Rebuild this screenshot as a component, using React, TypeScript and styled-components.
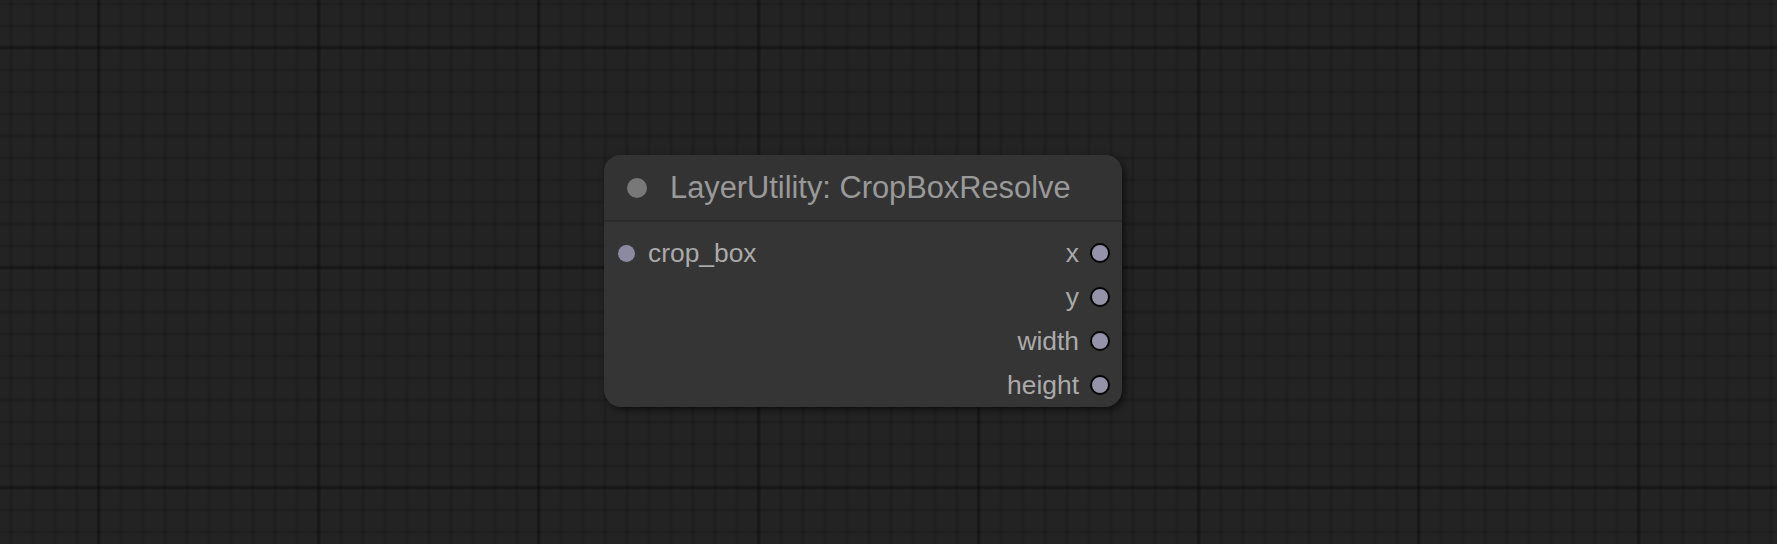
import React from "react";
import styled, { createGlobalStyle } from "styled-components";

const GlobalStyle = createGlobalStyle`
  html, body {
    margin: 0;
    padding: 0;
    width: 100%;
    height: 100%;
    overflow: hidden;
    background: #222222;
  }
  #root { width: 100%; height: 100%; }
`;

const Canvas = styled.div`
  position: relative;
  width: 1777px;
  height: 544px;
  background-color: #232323;
  background-image:
    linear-gradient(to right, transparent 0, rgba(0,0,0,0.14) 1px, rgba(0,0,0,0.26) 2px, rgba(0,0,0,0.26) 3px, rgba(0,0,0,0.14) 4px, transparent 5px),
    linear-gradient(to bottom, transparent 0, rgba(0,0,0,0.14) 1px, rgba(0,0,0,0.26) 2px, rgba(0,0,0,0.26) 3px, rgba(0,0,0,0.14) 4px, transparent 5px),
    linear-gradient(to right, transparent 0, rgba(0,0,0,0.1) 1px, rgba(0,0,0,0.14) 2px, rgba(0,0,0,0.1) 3px, transparent 4px),
    linear-gradient(to bottom, transparent 0, rgba(0,0,0,0.1) 1px, rgba(0,0,0,0.14) 2px, rgba(0,0,0,0.1) 3px, transparent 4px);
  background-size: 220px 220px, 220px 220px, 22px 22px, 22px 22px;
  background-position: 96px 0, 0 45px, 9px 0, 0 2px;
  font-family: "Liberation Sans", Arial, sans-serif;
`;

const Node = styled.div`
  position: absolute;
  left: 604px;
  top: 155px;
  width: 518px;
  height: 252px;
  border-radius: 17px;
  background: #353535;
  box-shadow: 3px 3px 7px rgba(0, 0, 0, 0.55);
  display: flex;
  flex-direction: column;
  overflow: hidden;
`;

const TitleBar = styled.div`
  box-sizing: border-box;
  height: 67px;
  flex: none;
  display: flex;
  align-items: center;
  padding-left: 23px;
  background: #333333;
  border-bottom: 2px solid #2b2b2b;
`;

const TitleDot = styled.span`
  width: 20px;
  height: 20px;
  border-radius: 50%;
  background: #787878;
  flex: none;
`;

const TitleText = styled.span`
  margin-left: 23px;
  font-size: 30.8px;
  color: #999999;
  white-space: nowrap;
  padding-top: 1px;
`;

const Body = styled.div`
  flex: 1;
  display: grid;
  grid-template-columns: 1fr 1fr;
  grid-auto-rows: 44px;
  padding-top: 9px;
`;

const Slot = styled.div<{ $side: "in" | "out" }>`
  display: flex;
  align-items: center;
  grid-column: ${(p) => (p.$side === "in" ? 1 : 2)};
  justify-content: ${(p) => (p.$side === "in" ? "flex-start" : "flex-end")};
  padding: ${(p) => (p.$side === "in" ? "0 0 0 14px" : "0 12px 0 0")};
  gap: ${(p) => (p.$side === "in" ? "13px" : "11px")};
`;

const SlotDot = styled.span<{ $outlined?: boolean }>`
  box-sizing: border-box;
  flex: none;
  width: ${(p) => (p.$outlined ? "20px" : "17px")};
  height: ${(p) => (p.$outlined ? "20px" : "17px")};
  border-radius: 50%;
  background: ${(p) => (p.$outlined ? "#9493aa" : "#8b8aa1")};
  border: ${(p) => (p.$outlined ? "2px solid #050505" : "none")};
`;

const SlotLabel = styled.span`
  font-size: 26.4px;
  color: #aaaaaa;
  white-space: nowrap;
  padding-top: 1px;
`;

const outputs = ["x", "y", "width", "height"];

export default function App() {
  return (
    <>
      <GlobalStyle />
      <Canvas>
        <Node>
          <TitleBar>
            <TitleDot />
            <TitleText>LayerUtility: CropBoxResolve</TitleText>
          </TitleBar>
          <Body>
            <Slot $side="in" style={{ gridRow: 1 }}>
              <SlotDot />
              <SlotLabel>crop_box</SlotLabel>
            </Slot>
            {outputs.map((o, i) => (
              <Slot key={o} $side="out" style={{ gridRow: i + 1 }}>
                <SlotLabel>{o}</SlotLabel>
                <SlotDot $outlined />
              </Slot>
            ))}
          </Body>
        </Node>
      </Canvas>
    </>
  );
}
